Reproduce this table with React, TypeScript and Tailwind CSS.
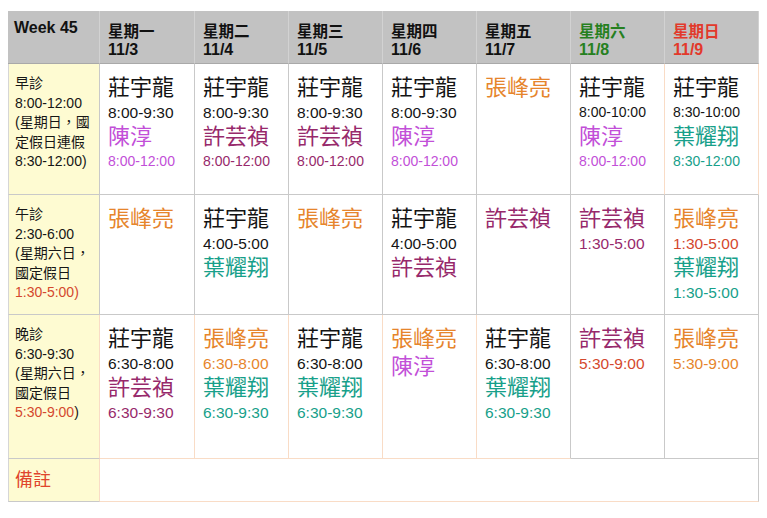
import React from 'react'

type Entry = {
  name: string
  time?: string
  color: string // 이름 색
  timeColor?: string // 시간 색 (없으면 이름 색)
  small?: boolean // 10자리 시간은 글씨가 조금 작음
}

type Cell = {
  items: Entry[]
  border: string
}

const FONT = { fontFamily: '"Liberation Sans", "Noto Sans CJK TC", sans-serif' }

const BLACK = 'text-[#141414]'
const CHEN = 'text-[#c24fd8]'
const XU = 'text-[#97296b]'
const ZHANG = 'text-[#e6852c]'
const YE = 'text-[#17a08a]'
const RED = 'text-[#d4482e]'

const zhuang = (time?: string, small?: boolean): Entry => ({ name: '莊宇龍', time, color: BLACK, small })
const chen = (time?: string, small?: boolean): Entry => ({ name: '陳淳', time, color: CHEN, small })
const xu = (time?: string, timeColor?: string, small?: boolean): Entry => ({ name: '許芸禎', time, color: XU, timeColor, small })
const zhang = (time?: string, timeColor?: string): Entry => ({ name: '張峰亮', time, color: ZHANG, timeColor })
const ye = (time?: string, small?: boolean): Entry => ({ name: '葉耀翔', time, color: YE, small })

// 셀 테두리: 오른쪽 / 아래쪽 색
const GG = 'border-r-[#c9c9c9] border-b-[#c9c9c9]'
const PG = 'border-r-[#f9dcc6] border-b-[#c9c9c9]'
const PP = 'border-r-[#f9dcc6] border-b-[#f9dcc6]'
const GP = 'border-r-[#c9c9c9] border-b-[#f9dcc6]'

const days = [
  { label: '星期一', date: '11/3', color: 'text-[#111111]' },
  { label: '星期二', date: '11/4', color: 'text-[#111111]' },
  { label: '星期三', date: '11/5', color: 'text-[#111111]' },
  { label: '星期四', date: '11/6', color: 'text-[#111111]' },
  { label: '星期五', date: '11/7', color: 'text-[#111111]' },
  { label: '星期六', date: '11/8', color: 'text-[#26801f]' },
  { label: '星期日', date: '11/9', color: 'text-[#e2392b]' },
]

const rows: { stub: React.ReactNode; stubBorder: string; cells: Cell[] }[] = [
  {
    stub: (
      <>
        早診<br />8:00-12:00<br />(星期日，國<br />定假日連假<br />8:30-12:00)
      </>
    ),
    stubBorder: GG,
    cells: [
      { items: [zhuang('8:00-9:30'), chen('8:00-12:00', true)], border: GG },
      { items: [zhuang('8:00-9:30'), xu('8:00-12:00', undefined, true)], border: GG },
      { items: [zhuang('8:00-9:30'), xu('8:00-12:00', undefined, true)], border: GG },
      { items: [zhuang('8:00-9:30'), chen('8:00-12:00', true)], border: GG },
      { items: [zhang()], border: GG },
      { items: [zhuang('8:00-10:00', true), chen('8:00-12:00', true)], border: PG },
      { items: [zhuang('8:30-10:00', true), ye('8:30-12:00', true)], border: PG },
    ],
  },
  {
    stub: (
      <>
        午診<br />2:30-6:00<br />(星期六日，<br />國定假日<br />
        <span className="text-[#d4482e]">1:30-5:00)</span>
      </>
    ),
    stubBorder: GG,
    cells: [
      { items: [zhang()], border: GG },
      { items: [zhuang('4:00-5:00'), ye()], border: GG },
      { items: [zhang()], border: GG },
      { items: [zhuang('4:00-5:00'), xu()], border: GG },
      { items: [xu()], border: GG },
      { items: [xu('1:30-5:00')], border: GG },
      { items: [zhang('1:30-5:00', RED), ye('1:30-5:00')], border: GG },
    ],
  },
  {
    stub: (
      <>
        晚診<br />6:30-9:30<br />(星期六日，<br />國定假日<br />
        <span className="text-[#d4482e]">5:30-9:00</span>)
      </>
    ),
    stubBorder: PG,
    cells: [
      { items: [zhuang('6:30-8:00'), xu('6:30-9:30')], border: PP },
      { items: [zhang('6:30-8:00'), ye('6:30-9:30')], border: PP },
      { items: [zhuang('6:30-8:00'), ye('6:30-9:30')], border: PP },
      { items: [zhang(), chen()], border: PP },
      { items: [zhuang('6:30-8:00'), ye('6:30-9:30')], border: GP },
      { items: [xu('5:30-9:00', RED)], border: GG },
      { items: [zhang('5:30-9:00')], border: GG },
    ],
  },
]

const ScheduleCell = ({ cell }: { cell: Cell }) => (
  <div className={`bg-white border-r border-b px-[8px] pt-[10px] ${cell.border}`}>
    {cell.items.map((item, i) => (
      <div key={i}>
        <div className={`text-[22px] leading-[28px] ${item.color}`}>{item.name}</div>
        {item.time && (
          <div
            className={`leading-[21px] ${item.small ? 'text-[14px]' : 'text-[15.5px]'} ${
              item.timeColor ?? item.color
            }`}
          >
            {item.time}
          </div>
        )}
      </div>
    ))}
  </div>
)

export default function App() {
  return (
    <div className="bg-white w-[767px] h-[518px] pt-[11px] pl-[8px]" style={FONT}>
      <div className="grid grid-cols-[92px_95px_94px_94px_94px_94px_94px_94px] grid-rows-[53px_131px_120px_144px_43px] w-[751px]">
        {/* 헤더 */}
        <div className="bg-[#c2c2c2] border-r border-b border-r-[#d2d2d2] border-b-[#a9a9a9] pl-[6px] pt-[7px] text-[16px] font-bold leading-[19px] text-[#111111]">
          Week 45
        </div>
        {days.map((d) => (
          <div
            key={d.label}
            className={`bg-[#c2c2c2] border-r border-b border-r-[#d2d2d2] border-b-[#a9a9a9] pl-[8px] pt-[12px] text-[15.5px] font-bold leading-[18px] ${d.color}`}
          >
            <div>{d.label}</div>
            <div className="text-[16px]">{d.date}</div>
          </div>
        ))}

        {/* 진료 시간 */}
        {rows.map((row, r) => (
          <React.Fragment key={r}>
            <div
              className={`bg-[#fefbd2] border-l border-l-[#d6d6d6] border-r border-b pl-[6px] pt-[10px] text-[14px] leading-[19.5px] text-[#161616] ${row.stubBorder}`}
            >
              {row.stub}
            </div>
            {row.cells.map((cell, c) => (
              <ScheduleCell key={c} cell={cell} />
            ))}
          </React.Fragment>
        ))}

        {/* 비고 */}
        <div className={`bg-[#fefbd2] border-l border-l-[#d6d6d6] border-r border-b flex items-center pl-[6px] text-[18px] text-[#e0452c] ${PG}`}>
          備註
        </div>
        <div className={`col-span-7 bg-white border-r border-b ${GP}`} />
      </div>
    </div>
  )
}
